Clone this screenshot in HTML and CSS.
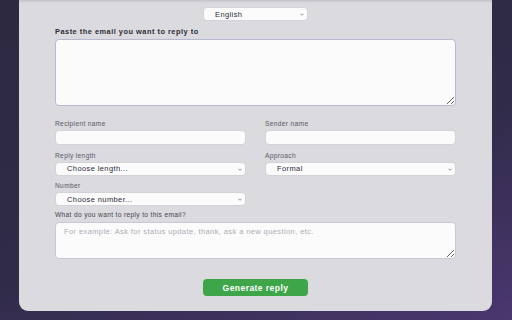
FILE: index.html
```html
<!DOCTYPE html>
<html lang="en">
<head>
    <meta charset="UTF-8">
    <meta name="viewport" content="width=device-width, initial-scale=1.0">
    <title>Email Reply Generator</title>
    <link rel="stylesheet" href="styles.css">
</head>
<body>
    <div class="card">
        <!-- Language picker -->
        <div class="lang-row">
            <div class="select-wrap lang">
                <select class="select">
                    <option>English</option>
                </select>
                <svg class="chevron" viewBox="0 0 8 5"><path d="M1 1l3 3 3-3" fill="none" stroke="#555" stroke-width="1.3"/></svg>
            </div>
        </div>

        <form class="reply-form">
            <label class="label-main" for="email">Paste the email you want to reply to</label>
            <textarea id="email" class="textarea big"></textarea>

            <div class="grid">
                <div class="field">
                    <label for="recipient">Recipient name</label>
                    <input type="text" id="recipient" class="input">
                </div>
                <div class="field">
                    <label for="sender">Sender name</label>
                    <input type="text" id="sender" class="input">
                </div>
                <div class="field">
                    <label for="length">Reply length</label>
                    <div class="select-wrap">
                        <select id="length" class="select">
                            <option>Choose length...</option>
                        </select>
                        <svg class="chevron" viewBox="0 0 8 5"><path d="M1 1l3 3 3-3" fill="none" stroke="#555" stroke-width="1.3"/></svg>
                    </div>
                </div>
                <div class="field">
                    <label for="approach">Approach</label>
                    <div class="select-wrap">
                        <select id="approach" class="select">
                            <option>Formal</option>
                        </select>
                        <svg class="chevron" viewBox="0 0 8 5"><path d="M1 1l3 3 3-3" fill="none" stroke="#555" stroke-width="1.3"/></svg>
                    </div>
                </div>
                <div class="field">
                    <label for="number">Number</label>
                    <div class="select-wrap">
                        <select id="number" class="select">
                            <option>Choose number...</option>
                        </select>
                        <svg class="chevron" viewBox="0 0 8 5"><path d="M1 1l3 3 3-3" fill="none" stroke="#555" stroke-width="1.3"/></svg>
                    </div>
                </div>
            </div>

            <label class="label-what" for="what">What do you want to reply to this email?</label>
            <textarea id="what" class="textarea small" placeholder="For example: Ask for status update, thank, ask a new question, etc."></textarea>

            <div class="actions">
                <button type="submit" class="btn">Generate reply</button>
            </div>
        </form>
    </div>
</body>
</html>
```

FILE: styles.css
```css
* {
    box-sizing: border-box;
}

body {
    margin: 0;
    height: 320px;
    overflow: hidden;
    font-family: "Liberation Sans", Arial, sans-serif;
    color: #2b2b33;
    background: linear-gradient(160deg, #2c2941 0%, #302b48 55%, #4a376f 100%);
}

.card {
    margin-left: 19px;
    width: 473px;
    height: 311px;
    padding: 7px 36px 0;
    background: #dbdadf;
    border-radius: 0 0 9px 9px;
    box-shadow: inset 0 3px 3px -2px rgba(0, 0, 0, 0.15);
}

.lang-row {
    display: flex;
    justify-content: center;
}

.select-wrap {
    position: relative;
}

.select-wrap.lang {
    width: 105px;
}

.select {
    appearance: none;
    -webkit-appearance: none;
    display: block;
    width: 100%;
    height: 14px;
    padding: 0 0 0 11px;
    font-family: inherit;
    font-size: 7.5px;
    letter-spacing: 0.4px;
    color: #2c2c38;
    background: #fbfbfc;
    border: 1px solid #d2d2d8;
    border-radius: 4px;
    outline: none;
}

.chevron {
    position: absolute;
    right: 4px;
    top: 6px;
    width: 4px;
    height: 3px;
}

.reply-form {
    margin-top: 7px;
}

label {
    display: block;
    font-size: 6.6px;
    line-height: 8px;
    letter-spacing: 0.35px;
    color: #595963;
    margin-bottom: 2px;
}

.label-main {
    font-size: 7.4px;
    font-weight: bold;
    letter-spacing: 0.5px;
    color: #2e2e37;
    margin-bottom: 3px;
}

.label-what {
    margin-top: 1px;
    margin-bottom: 3px;
    color: #44444e;
}

.textarea {
    display: block;
    width: 100%;
    padding: 4px 8px;
    font-family: inherit;
    font-size: 7.5px;
    letter-spacing: 0.4px;
    background: #fbfbfc;
    border: 1px solid #c9c8d6;
    border-radius: 4px;
    outline: none;
}

.textarea.big {
    height: 67px;
    margin-bottom: 14px;
    border-color: #b8b8d2;
}

.textarea.small {
    height: 37px;
}

.textarea::placeholder {
    color: #acacb5;
}

.grid {
    display: grid;
    grid-template-columns: 1fr 1fr;
    column-gap: 19px;
    row-gap: 6.5px;
    margin-bottom: 5px;
}

.input {
    display: block;
    width: 100%;
    height: 15px;
    background: #fbfbfc;
    border: 1px solid #d2d2d8;
    border-radius: 4px;
    outline: none;
}

.actions {
    display: flex;
    justify-content: center;
    margin-top: 20px;
}

.btn {
    width: 105px;
    height: 17px;
    font-family: inherit;
    font-size: 8.5px;
    font-weight: bold;
    letter-spacing: 0.45px;
    color: #fff;
    background: #3ea548;
    border: none;
    border-radius: 4px;
    cursor: pointer;
}
```
